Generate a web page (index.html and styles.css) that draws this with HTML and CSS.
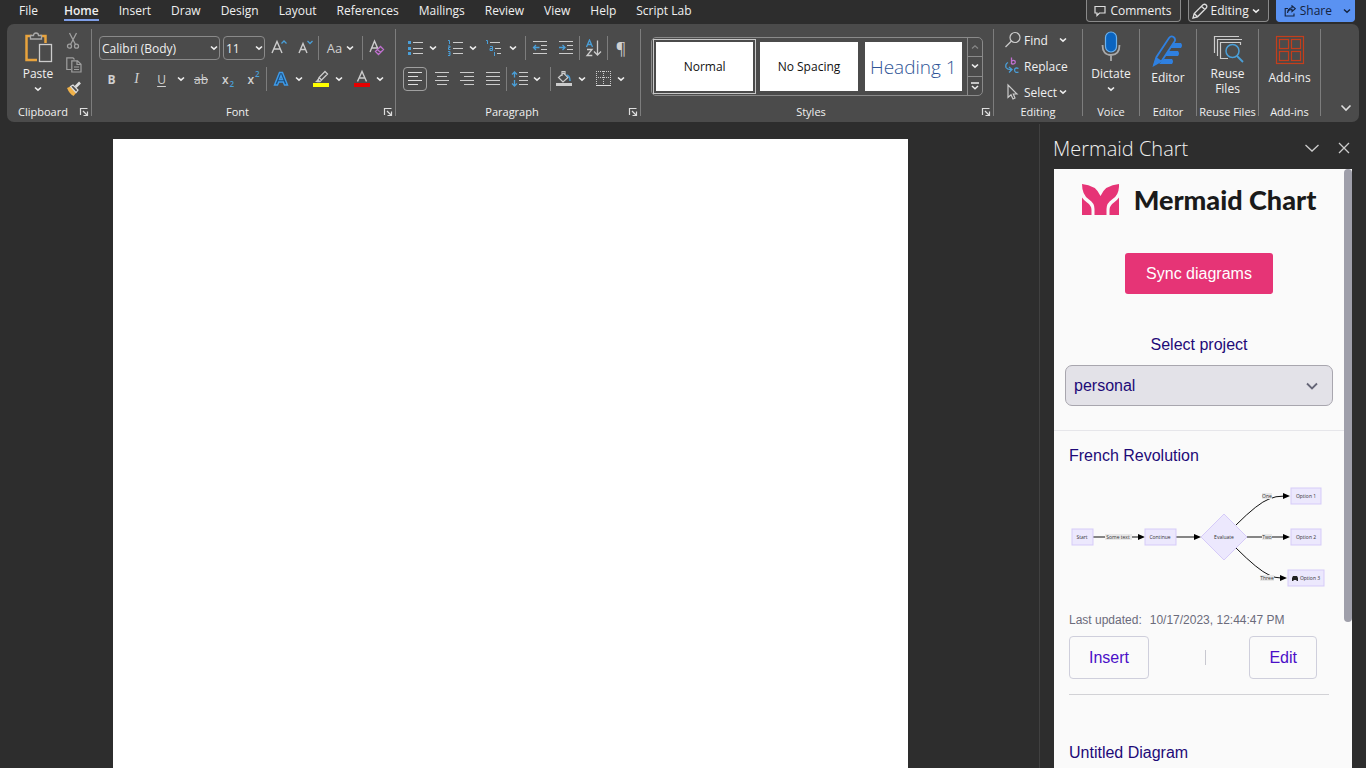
FILE: index.html
```html
<!DOCTYPE html>
<html lang="en">
  <head>
    <meta charset="utf-8">
    <title>Document</title>
    <link rel="stylesheet" href="styles.css">
  </head>
  <body>

    <svg class="display-none">
      <symbol id="chevron" viewBox="0 0 8 8">
        <path d="M1 2.5 L4 5.2 L7 2.5" fill="none" stroke="#eee" stroke-width="1.6"/>
      </symbol>
      <symbol id="launcher" viewBox="0 0 10 10">
        <path d="M1.5 8 V1.5 H8.5 M4 4 L8 8 M8.5 4.5 V8.5 H4.5" fill="none" stroke="#ddd" stroke-width="1.2"/>
      </symbol>
    </svg>

    <header id="tab-bar">
      <nav class="tabs">
        <a class="tab tab-file" href="#">File</a>
        <a class="tab tab-active" href="#">Home</a>
        <a class="tab" href="#">Insert</a>
        <a class="tab" href="#">Draw</a>
        <a class="tab" href="#">Design</a>
        <a class="tab" href="#">Layout</a>
        <a class="tab" href="#">References</a>
        <a class="tab" href="#">Mailings</a>
        <a class="tab" href="#">Review</a>
        <a class="tab" href="#">View</a>
        <a class="tab" href="#">Help</a>
        <a class="tab" href="#">Script Lab</a>
      </nav>
      <div class="header-actions">
        <button class="header-button">
          <svg width="12" height="12" viewBox="0 0 12 12"><path d="M1 1.5 H11 V8 H5.5 L3 10.5 V8 H1 Z" fill="none" stroke="#ddd" stroke-width="1.2"/></svg>
          Comments
        </button>
        <button class="header-button header-button-mode">
          <svg width="16" height="16" viewBox="0 0 16 16"><path d="M1 15 L2.2 10.5 L11 1.8 Q12.6 .6 14.2 2 Q15.5 3.6 14.2 5 L5.5 13.8 Z M9.5 3.2 L12.8 6.5 M2.2 10.5 L5.5 13.8" fill="none" stroke="#ddd" stroke-width="1.3"/></svg>
          Editing
          <svg width="8" height="8"><use href="#chevron"/></svg>
        </button>
        <button class="header-button header-button-share">
          <svg width="12" height="12" viewBox="0 0 12 12"><path d="M4 3.5 H1.2 V11 H10 V8.5 M3.5 8 Q4 4.6 8 4.5 V6.5 L11.3 3.6 L8 .8 V2.8 Q4 3.2 3.5 8" fill="none" stroke="#14233f" stroke-width="1.1"/></svg>
          Share
          <svg class="share-chevron" width="8" height="8" viewBox="0 0 8 8"><path d="M1 2.5 L4 5.2 L7 2.5" fill="none" stroke="#14233f" stroke-width="1.4"/></svg>
        </button>
      </div>
    </header>

    <section id="ribbon">

      <div class="group group-clipboard">
        <div class="clipboard-tools">
          <button class="big-tool">
            <svg width="30" height="32" viewBox="0 0 30 32">
              <path d="M9 5 H3.5 V29 H14" fill="none" stroke="#e8a33d" stroke-width="2.5"/>
              <path d="M17 5 H22.500 V12" fill="none" stroke="#e8a33d" stroke-width="2.5"/>
              <path d="M7.500 8 V4.500 H10.500 Q10.500 2 13 2 Q15.500 2 15.500 4.500 H18.500 V8 Z" fill="#4b4b4b" stroke="#aaa" stroke-width="1.3"/>
              <rect x="16.500" y="13.500" width="12" height="17" fill="#4b4b4b" stroke="#ccc" stroke-width="1.3"/>
            </svg>
            Paste
            <svg width="8" height="8"><use href="#chevron"/></svg>
          </button>
          <div class="clipboard-side">
            <button class="tool" title="Cut">
              <svg width="16" height="18" viewBox="0 0 16 18" fill="none" stroke="#a0a0a0" stroke-width="1.3"><path d="M3.500 1 L9.500 12.500 M10.500 1 L4.500 12.500"/><circle cx="3.500" cy="14.200" r="2"/><circle cx="10.500" cy="14.200" r="2"/></svg>
            </button>
            <button class="tool" title="Copy">
              <svg width="16" height="16" viewBox="0 0 16 16" fill="none" stroke="#a0a0a0" stroke-width="1.2"><path d="M5 12.500 H.8 V.8 H7 L8.500 2.500"/><path d="M5.800 3.800 H11.500 L15 7.200 V15 H5.800 Z M11 4 V7.500 H15 M8 10 H13 M8 12.500 H13"/></svg>
            </button>
            <button class="tool" title="Format Painter">
              <svg width="16" height="16" viewBox="0 0 16 16"><path d="M1 7 L4.500 5.500 L10.500 11.500 L7.500 15 Q3.500 13 1 7 Z" fill="#f0b24a"/><path d="M4.500 5.500 L7 4 L12 9 L10 11.500 Z" fill="#4b4b4b" stroke="#ddd" stroke-width="1.2"/><path d="M9.500 6 L14 1.500" stroke="#ddd" stroke-width="2.6"/></svg>
            </button>
          </div>
        </div>
        <div class="group-label"><span>Clipboard</span><svg width="10" height="10"><use href="#launcher"/></svg></div>
      </div>
      <div class="group-divider"></div>

      <div class="group group-font">
        <div class="tool-row font-row-1">
          <select class="combo" aria-label="Font"><option>Calibri (Body)</option></select>
          <select class="combo combo-size" aria-label="Font size"><option>11</option></select>
          <button class="tool" title="Increase font size">
            <svg width="18" height="18" viewBox="0 0 18 18" fill="none"><path d="M2 14 L7 2.500 L12 14 M3.800 10 H10.200" stroke="#ccc" stroke-width="1.4"/><path d="M11.500 4.500 L14 2 L16.500 4.500" stroke="#4a9fd8" stroke-width="1.3"/></svg>
          </button>
          <button class="tool" title="Decrease font size">
            <svg width="18" height="18" viewBox="0 0 18 18" fill="none"><path d="M2 14 L6 4.500 L10 14 M3.400 10.500 H8.600" stroke="#ccc" stroke-width="1.4"/><path d="M10.500 2 L13 4.500 L15.500 2" stroke="#4a9fd8" stroke-width="1.3"/></svg>
          </button>
          <i class="separator"></i>
          <button class="tool tool-case">Aa <svg width="8" height="8"><use href="#chevron"/></svg></button>
          <i class="separator"></i>
          <button class="tool" title="Clear formatting">
            <svg width="18" height="18" viewBox="0 0 18 18" fill="none"><path d="M2 13 L6.500 2 L10 10 M4 9 H9" stroke="#ccc" stroke-width="1.4"/><path d="M7.500 12.500 L12.500 7.500 L15.500 10.500 L10.500 15.500 Z M9.500 10.500 L12.500 13.500" stroke="#c070d0" stroke-width="1.3"/></svg>
          </button>
        </div>
        <div class="tool-row font-row-2">
          <button class="tool tool-bold">B</button>
          <button class="tool tool-italic">I</button>
          <button class="tool tool-underline">U</button>
          <button class="tool" title="Underline style"><svg width="8" height="8"><use href="#chevron"/></svg></button>
          <button class="tool tool-strike">ab</button>
          <button class="tool tool-script">x<sub>2</sub></button>
          <button class="tool tool-script">x<sup>2</sup></button>
          <i class="separator"></i>
          <button class="tool" title="Text effects">
            <svg width="20" height="20" viewBox="0 0 20 20"><path d="M3.500 16 L8.500 3.500 H11.500 L16.500 16 H13.500 L12.300 13 H7.700 L6.500 16 Z M8.500 10.500 H11.500 L10 6.500 Z" fill="#1b4f80" stroke="#3f9be8" stroke-width="1.4"/></svg>
            <svg width="8" height="8"><use href="#chevron"/></svg>
          </button>
          <button class="tool" title="Text highlight color">
            <svg width="20" height="20" viewBox="0 0 20 20"><path d="M6.500 12.500 L8 8.500 L14 2.500 L16.500 5 L10.500 11 L9 12.500 Z M8 8.500 L10.500 11" fill="none" stroke="#ccc" stroke-width="1.3"/><path d="M4 13 H9 L7.500 9.500 Z" fill="#ccc"/><rect x="2" y="14" width="16" height="4" fill="#ff0"/></svg>
            <svg width="8" height="8"><use href="#chevron"/></svg>
          </button>
          <button class="tool" title="Font color">
            <svg width="20" height="20" viewBox="0 0 20 20"><path d="M5.500 12.500 L10 2.500 L14.500 12.500 M7 9 H13" fill="none" stroke="#ccc" stroke-width="1.4"/><rect x="2" y="14" width="16" height="4" fill="#e60000"/></svg>
            <svg width="8" height="8"><use href="#chevron"/></svg>
          </button>
        </div>
        <div class="group-label"><span>Font</span><svg width="10" height="10"><use href="#launcher"/></svg></div>
      </div>
      <div class="group-divider"></div>

      <div class="group group-paragraph">
        <div class="tool-row paragraph-row-1">
          <button class="tool" title="Bullets">
            <svg width="20" height="18" viewBox="0 0 20 18"><path d="M3 2 H6 V5 H3 Z M3 8 H6 V11 H3 Z M3 13 H6 V16 H3 Z" fill="#4a9fd8"/><path d="M8 3.500 H18 M8 9.500 H18 M8 14.500 H18" stroke="#ccc"/></svg>
            <svg width="8" height="8"><use href="#chevron"/></svg>
          </button>
          <button class="tool" title="Numbering">
            <svg width="20" height="18" viewBox="0 0 20 18" fill="none"><path d="M3 1.500 H4.500 V5 M3 7 H5 V8.500 H3.500 V10.500 H5.500 M3 12.500 H5 V16.500 H3 M3.500 14.500 H5" stroke="#4a9fd8"/><path d="M8 3.500 H18 M8 9.500 H18 M8 14.500 H18" stroke="#ccc"/></svg>
            <svg width="8" height="8"><use href="#chevron"/></svg>
          </button>
          <button class="tool" title="Multilevel list">
            <svg width="20" height="18" viewBox="0 0 20 18" fill="none"><path d="M1 1.500 H2.500 V5 M5 7.500 H7.500 V11.500 H5 V9.500 H7.500 M9.500 13 V17 M9.500 11.500 V12" stroke="#4a9fd8"/><path d="M5 3.500 H15 M10 9.500 H16 M12 14.500 H16" stroke="#ccc"/></svg>
            <svg width="8" height="8"><use href="#chevron"/></svg>
          </button>
          <i class="separator"></i>
          <button class="tool" title="Decrease indent">
            <svg width="16" height="16" viewBox="0 0 16 16" fill="none"><path d="M1 1.500 H15 M9 5.500 H15 M9 9.500 H15 M1 13.500 H15" stroke="#ccc"/><path d="M7.500 7.500 H1.500 M4 5 L1.500 7.500 L4 10" stroke="#4a9fd8" stroke-width="1.3"/></svg>
          </button>
          <button class="tool" title="Increase indent">
            <svg width="16" height="16" viewBox="0 0 16 16" fill="none"><path d="M1 1.500 H15 M9 5.500 H15 M9 9.500 H15 M1 13.500 H15" stroke="#ccc"/><path d="M1 7.500 H7 M4.500 5 L7 7.500 L4.500 10" stroke="#4a9fd8" stroke-width="1.3"/></svg>
          </button>
          <i class="separator"></i>
          <button class="tool" title="Sort">
            <svg width="18" height="18" viewBox="0 0 18 18" fill="none"><path d="M1.500 8 L4.500 1 L7.500 8 M2.500 5.500 H6.500" stroke="#4a9fd8" stroke-width="1.3"/><path d="M2 10.500 H7 L2 16.500 H7.300 M12.500 1.500 V16 M9 12.500 L12.500 16 L16 12.500" stroke="#ccc" stroke-width="1.3"/></svg>
          </button>
          <i class="separator"></i>
          <button class="tool tool-pilcrow">¶</button>
        </div>
        <div class="tool-row paragraph-row-2">
          <button class="tool tool-pressed" title="Align left">
            <svg width="16" height="16" viewBox="0 0 16 16"><path d="M1 1.500 H15 M1 5.500 H11 M1 9.500 H15 M1 13.500 H11" stroke="#ddd"/></svg>
          </button>
          <button class="tool" title="Center">
            <svg width="16" height="16" viewBox="0 0 16 16"><path d="M1 1.500 H15 M3 5.500 H13 M1 9.500 H15 M3 13.500 H13" stroke="#ccc"/></svg>
          </button>
          <button class="tool" title="Align right">
            <svg width="16" height="16" viewBox="0 0 16 16"><path d="M1 1.500 H15 M5 5.500 H15 M1 9.500 H15 M5 13.500 H15" stroke="#ccc"/></svg>
          </button>
          <button class="tool" title="Justify">
            <svg width="16" height="16" viewBox="0 0 16 16"><path d="M1 1.500 H15 M1 5.500 H15 M1 9.500 H15 M1 13.500 H15" stroke="#ccc"/></svg>
          </button>
          <i class="separator"></i>
          <button class="tool" title="Line spacing">
            <svg width="20" height="16" viewBox="0 0 20 16" fill="none"><path d="M5.500 1 V6.500 M3 3.500 L5.500 1 L8 3.500 M5.500 9 V15 M3 12.500 L5.500 15 L8 12.500" stroke="#4a9fd8" stroke-width="1.3"/><path d="M10 1.500 H19 M10 5.500 H19 M10 9.500 H19 M10 13.500 H19" stroke="#ccc"/></svg>
            <svg width="8" height="8"><use href="#chevron"/></svg>
          </button>
          <i class="separator"></i>
          <button class="tool" title="Shading">
            <svg width="20" height="18" viewBox="0 0 20 18" fill="none"><path d="M4.500 7.500 L9.500 3 L14 7.500 L9 12 Z M8 6 V1.500 H11 V4.500" stroke="#ccc" stroke-width="1.2"/><path d="M12.500 5 Q16 5.500 16 11" stroke="#4a9fd8" stroke-width="1.5"/><rect x="2" y="13" width="16" height="3" fill="#ccc"/></svg>
            <svg width="8" height="8"><use href="#chevron"/></svg>
          </button>
          <button class="tool" title="Borders">
            <svg width="20" height="16" viewBox="0 0 20 16" fill="none"><path d="M3 .5 H18 M3.500 0 V13 M17.500 0 V13 M3 6.500 H18 M10.500 0 V13" stroke="#ccc" stroke-dasharray="1 1"/><path d="M3 14.500 H18" stroke="#ddd"/></svg>
            <svg width="8" height="8"><use href="#chevron"/></svg>
          </button>
        </div>
        <div class="group-label"><span>Paragraph</span><svg width="10" height="10"><use href="#launcher"/></svg></div>
      </div>
      <div class="group-divider"></div>

      <div class="group group-styles">
        <div class="gallery">
          <div class="gallery-items">
            <button class="style-card style-card-selected"><span>Normal</span></button>
            <button class="style-card"><span>No Spacing</span></button>
            <button class="style-card style-card-heading"><span>Heading 1</span></button>
          </div>
          <div class="gallery-scroll">
            <button title="Previous row"><svg width="8" height="8" viewBox="0 0 8 8"><path d="M1 5.500 L4 2.800 L7 5.500" fill="none" stroke="#888" stroke-width="1.2"/></svg></button>
            <button title="Next row"><svg width="8" height="8"><use href="#chevron"/></svg></button>
            <button title="More styles"><svg width="8" height="8" viewBox="0 0 8 8"><path d="M0 1 H8 M1 4 L4 6.700 L7 4" fill="none" stroke="#eee" stroke-width="1.5"/></svg></button>
          </div>
        </div>
        <div class="group-label"><span>Styles</span><svg width="10" height="10"><use href="#launcher"/></svg></div>
      </div>
      <div class="group-divider"></div>

      <div class="group group-editing">
        <div class="editing-tools">
          <button class="text-tool">
            <svg width="18" height="18" viewBox="0 0 18 18" fill="none" stroke="#ccc" stroke-width="1.2"><circle cx="11" cy="6.500" r="5"/><path d="M7.500 10 L1.500 16"/></svg>
            Find
            <svg class="find-chevron" width="8" height="8"><use href="#chevron"/></svg>
          </button>
          <button class="text-tool">
            <svg width="18" height="18" viewBox="0 0 18 18" fill="none" stroke-width="1.3"><path d="M7.500 .5 V7 M7.500 4.500 Q9 2.500 11 4 Q12 7 9 7 H7.500" stroke="#c070d0"/><path d="M14.500 11.500 Q11 10 10.500 13 Q11 16.500 14.500 15" stroke="#4a9fd8"/><path d="M4 5.500 Q1 7 2 10.500 Q3.500 13 7.500 12.500 M5 10 L8 12.500 L5 15.500" stroke="#4a9fd8"/></svg>
            Replace
          </button>
          <button class="text-tool">
            <svg width="18" height="18" viewBox="0 0 18 18" fill="none" stroke="#ccc" stroke-width="1.2"><path d="M4 2 V14.500 L7 11.800 L9 16 L11 15 L9.300 11 H13 Z"/></svg>
            Select
            <svg width="8" height="8"><use href="#chevron"/></svg>
          </button>
        </div>
        <div class="group-label"><span>Editing</span></div>
      </div>
      <div class="group-divider"></div>

      <div class="group">
        <button class="big-tool">
          <svg width="24" height="32" viewBox="0 0 24 32" fill="none"><rect x="6.500" y="1" width="11" height="20" rx="5.500" fill="#0a64c0" stroke="#6cb2ee" stroke-width="1.2"/><path d="M3.500 14 Q3.500 24 12 24 Q20.500 24 20.500 14 M12 24 V30" stroke="#aaa" stroke-width="1.8"/></svg>
          Dictate
          <svg width="8" height="8"><use href="#chevron"/></svg>
        </button>
        <div class="group-label"><span>Voice</span></div>
      </div>
      <div class="group-divider"></div>

      <div class="group">
        <button class="big-tool">
          <svg width="32" height="32" viewBox="0 0 32 32"><path d="M18 8 H29 Q31 10.500 29 13 H18 Z M15 16 H26 Q28 18.500 26 21 H12 Z M12 24 H20 Q22 26.500 20 29 H7 Z" fill="#2f80e0"/><path d="M2 30 L4.500 22 L17 3 Q19 .5 21.500 2 Q24 4 22.500 6.500 L10 25.500 Z" fill="#4b4b4b" stroke="#2f80e0" stroke-width="1.8"/><path d="M1 31 L4 22 L10 26 Z" fill="#2f80e0"/></svg>
          Editor
        </button>
        <div class="group-label"><span>Editor</span></div>
      </div>
      <div class="group-divider"></div>

      <div class="group">
        <button class="big-tool big-tool-wide">
          <svg width="32" height="32" viewBox="0 0 32 32" fill="none"><path d="M2.500 22 V5.500 H27 M5.500 25 V8.500 H30" stroke="#ccc" stroke-width="1.2"/><path d="M16 27.500 H8.500 V11.500 H28.500 V14" stroke="#ccc" stroke-width="1.2"/><circle cx="20.500" cy="20" r="6.500" stroke="#4a9fd8" stroke-width="1.5"/><path d="M25 25 L31 31" stroke="#4a9fd8" stroke-width="1.8"/></svg>
          <span>Reuse<br>Files</span>
        </button>
        <div class="group-label"><span>Reuse Files</span></div>
      </div>
      <div class="group-divider"></div>

      <div class="group">
        <button class="big-tool big-tool-wide">
          <svg width="32" height="32" viewBox="0 0 32 32" fill="none" stroke="#c43e1c" stroke-width="1.2"><rect x="2.500" y="1.500" width="27" height="27"/><rect x="5.500" y="4.500" width="9" height="9"/><rect x="17.500" y="4.500" width="9" height="9"/><rect x="5.500" y="16.500" width="9" height="9"/><rect x="17.500" y="16.500" width="9" height="9"/></svg>
          Add-ins
        </button>
        <div class="group-label"><span>Add-ins</span></div>
      </div>
      <div class="group-divider"></div>

      <button class="ribbon-collapse" title="Collapse ribbon">
        <svg width="12" height="8" viewBox="0 0 12 8"><path d="M1.500 1.500 L6 6 L10.500 1.500" fill="none" stroke="#ddd" stroke-width="1.6"/></svg>
      </button>
    </section>

    <div id="workspace">
      <main id="canvas">
        <article class="page"></article>
      </main>

      <aside id="task-pane">
        <div class="pane-header">
          <h2>Mermaid Chart</h2>
          <button title="Task pane options"><svg width="16" height="16" viewBox="0 0 16 16"><path d="M1.500 5 L8 11 L14.500 5" fill="none" stroke="#ccc" stroke-width="1.3"/></svg></button>
          <button title="Close"><svg width="16" height="16" viewBox="0 0 16 16"><path d="M3 3 L13 13 M13 3 L3 13" fill="none" stroke="#ccc" stroke-width="1.3"/></svg></button>
        </div>

        <div class="webview">
          <div class="webview-content">
            <div class="brand">
              <svg width="37" height="31" viewBox="0 0 37 31">
                <path d="M0 0 Q14 1 18.500 12 Q23 1 37 0 Q37.500 11 30 15.500 Q24.500 19 24.500 25 V31 H12.500 V25 Q12.500 19 7 15.500 Q0 11 0 0 Z" fill="#e63476"/>
                <path d="M0 13.500 Q2 16.500 5 18.500 Q9.500 21.500 9.500 26 V31 H0 Z M37 13.500 Q35 16.500 32 18.500 Q27.500 21.500 27.500 26 V31 H37 Z" fill="#e63476"/>
              </svg>
              <span>Mermaid Chart</span>
            </div>
            <button class="sync">Sync diagrams</button>

            <div class="project">
              <label for="project">Select project</label>
              <select id="project"><option>personal</option></select>
            </div>

            <section class="diagram">
              <h3>French Revolution</h3>
              <svg class="chart" viewBox="0 0 260 112">
                <g class="edges">
                  <path d="M24 57 H70 M107 57 H126 M178 57 H215 M167 45 Q189 23 200 19 Q206 16 216 16 M167 68 Q189 90 200 95 Q206 98 212 98"/>
                </g>
                <g class="arrows">
                  <path d="M69 54 L76 57 L69 60 Z M125 54 L132 57 L125 60 Z M214 54 L221 57 L214 60 Z M214 13 L221 16 L214 19 Z M211 95 L218 98 L211 101 Z"/>
                </g>
                <g class="nodes">
                  <rect x="3" y="49" width="21" height="16"/>
                  <rect x="76" y="49" width="31" height="16"/>
                  <path d="M155 34 L178 57 L155 80 L132 57 Z"/>
                  <rect x="222" y="8" width="30" height="16"/>
                  <rect x="222" y="49" width="30" height="16"/>
                  <rect x="219" y="90" width="36" height="16"/>
                </g>
                <g class="edge-labels">
                  <rect x="36" y="54" width="27" height="6"/><text x="49" y="59">Some text</text>
                  <rect x="193" y="13" width="10" height="6"/><text x="198" y="18">One</text>
                  <rect x="193" y="54" width="10" height="6"/><text x="198" y="59">Two</text>
                  <rect x="191" y="95" width="14" height="6"/><text x="198" y="100">Three</text>
                </g>
                <text x="13" y="59">Start</text>
                <text x="91" y="59">Continue</text>
                <text x="155" y="59">Evaluate</text>
                <text x="237" y="18">Option 1</text>
                <text x="237" y="59">Option 2</text>
                <path d="M223 98 L224 96 H228 L229 98 V101 H227.500 V100 H224.500 V101 H223 Z" fill="#222"/>
                <text x="241" y="100">Option 3</text>
              </svg>
              <p class="updated"><span>Last updated:</span><time>10/17/2023, 12:44:47 PM</time></p>
              <div class="diagram-actions">
                <button>Insert</button>
                <i class="action-divider"></i>
                <button>Edit</button>
              </div>
            </section>

            <section class="diagram">
              <h3>Untitled Diagram</h3>
            </section>
          </div>
          <div class="scrollbar"><div class="scrollbar-thumb"></div></div>
        </div>
      </aside>
    </div>

  </body>
</html>
```

FILE: styles.css
```css
*,
*:before,
*:after {
  box-sizing: border-box;
}

body {
  display: flex;
  flex-flow: column;
  height: 100vh;
  overflow: hidden;
  background: #2d2d2d;
  margin: 0px;
  color: #F0F0F0;
  font-family: 'Open Sans', 'Noto Sans', sans-serif;
  font-size: 12px;
}

button,
select {
  border: 0px;
  margin: 0px;
  padding: 0px;
  background: transparent;
  color: inherit;
  font: inherit;
}

svg {
  flex: none;
}

.display-none {
  display: none;
}


/* Tabs */

#tab-bar {
  display: flex;
  justify-content: space-between;
  height: 24px;
  padding: 0px 11px 0px 19px;
}

.tabs {
  display: flex;
  gap: 20px;
}
.tab {
  height: 21px;
  color: #F0F0F0;
  line-height: 21px;
  text-decoration: none;
  white-space: nowrap;
}
.tab-file {
  margin-right: 6px;
}
.tab-active {
  border-bottom: 2px solid #7F9FE8;
  font-weight: 600;
}

.header-actions {
  display: flex;
  gap: 7px;
}
.header-button {
  display: flex;
  align-items: center;
  gap: 4px;
  height: 22px;
  border: 1px solid #8A8A8A;
  border-top: 0px;
  border-radius: 0px 0px 4px 4px;
  padding: 0px 8px 0px 7px;
  background: #3A3A3A;
}
.header-button-mode {
  gap: 3px;
  padding: 0px 8px 0px 3px;
}
.header-button-share {
  border-color: #5A92F2;
  padding: 0px 3px 0px 7px;
  background: #5A92F2;
  color: #14233F;
}
.share-chevron {
  margin-left: 7px;
}


/* Ribbon */

#ribbon {
  display: flex;
  height: 98px;
  margin: 0px 7px;
  border-radius: 7px;
  padding: 5px 0px 2px;
  background: #4B4B4B;
}

.group {
  display: flex;
  flex: none;
  flex-flow: column;
  align-items: center;
}
.group-divider {
  width: 1px;
  margin-bottom: 4px;
  background: #7D7D7D;
}
.group-label {
  display: flex;
  align-items: center;
  align-self: stretch;
  margin-top: auto;
  font-size: 11px;
  line-height: 16px;
  white-space: nowrap;
}
.group-label span {
  flex: 1;
  text-align: center;
}
.group-label svg {
  margin-right: 2px;
}

.tool {
  display: flex;
  justify-content: center;
  align-items: center;
  gap: 4px;
  height: 24px;
  color: #D0D0D0;
}
.tool-row {
  display: grid;
  align-self: flex-start;
  height: 24px;
  margin-top: 7px;
}
.separator {
  justify-self: end;
  width: 1px;
  background: #7D7D7D;
}

.big-tool {
  display: flex;
  flex-flow: column;
  align-items: center;
  min-width: 56px;
  padding: 2px 0px 0px;
  line-height: 15px;
}
.big-tool-wide {
  min-width: 61px;
}
.big-tool svg:first-child {
  margin-bottom: 3px;
}
.big-tool svg:last-child {
  margin-top: 4px;
}

.group-clipboard {
  width: 84px;
}
.clipboard-tools {
  display: flex;
  align-self: flex-start;
  padding-left: 3px;
}
.clipboard-side {
  display: flex;
  flex-flow: column;
}

.group-font {
  width: 303px;
}
.group-font .tool-row {
  margin-left: 7px;
}
.font-row-1 {
  grid-template-columns: 124px 42px 28px 25px 1px 43px 1px 27px;
}
.font-row-2 {
  grid-template-columns: 25px 25px 25px 13px 28px 26px 25px 1px 39px 42px 40px;
}
.combo {
  appearance: none;
  height: 24px;
  margin-right: 3px;
  border: 1px solid #8A8A8A;
  border-radius: 4px;
  padding-left: 2px;
  background: url("data:image/svg+xml,%3Csvg xmlns='http://www.w3.org/2000/svg' width='8' height='8'%3E%3Cpath d='M1 2.5 L4 5.2 L7 2.5' fill='none' stroke='%23eee' stroke-width='1.6'/%3E%3C/svg%3E") right 1px center no-repeat;
}
.combo-size {
  margin-right: 0px;
}
.tool-case {
  font-size: 13px;
}
.tool-bold {
  font-weight: 700;
}
.tool-italic {
  font-family: 'Liberation Serif', serif;
  font-size: 14px;
  font-style: italic;
}
.tool-underline {
  text-decoration: underline;
  text-underline-offset: 2px;
}
.tool-strike {
  text-decoration: line-through;
}
.tool-script {
  gap: 1px;
  font-weight: 600;
}
.tool-script sub,
.tool-script sup {
  color: #4A9FD8;
  font-size: 8px;
  line-height: 8px;
}
.tool-script sub {
  align-self: flex-end;
  margin-bottom: 3px;
}
.tool-script sup {
  align-self: flex-start;
  margin-top: 3px;
}

.group-paragraph {
  width: 244px;
}
.group-paragraph .tool-row {
  margin-left: 5px;
}
.paragraph-row-1 {
  grid-template-columns: 40px 40px 40px 5px 27px 26px 1px 27px 1px 26px;
}
.paragraph-row-2 {
  grid-template-columns: 28px 25px 25px 27px 1px 36px 8px 38px 40px;
}
.tool-pilcrow {
  font-size: 16px;
}
.tool-pressed {
  width: 24px;
  justify-self: center;
  border: 1px solid #A0A0A0;
  border-radius: 4px;
}

.group-styles {
  flex: 1;
  align-items: stretch;
}
.gallery {
  display: flex;
  height: 59px;
  margin: 8px 10px 0px;
  border: 1px solid #8A8A8A;
  border-radius: 5px;
}
.gallery-items {
  display: flex;
  flex: 1;
  gap: 1px;
  padding: 1px 2px 1px 1px;
}
.style-card {
  flex: 1;
  border: 1px solid transparent;
  padding: 2px;
  color: #111;
  white-space: nowrap;
}
.style-card span {
  display: flex;
  justify-content: center;
  align-items: center;
  height: 100%;
  background: #FFF;
}
.style-card-selected {
  border-color: #C8C8C8;
}
.style-card-heading {
  color: #2F5496;
  font-size: 19px;
  font-weight: 300;
  line-height: 20px;
}
.gallery-scroll {
  display: flex;
  flex-flow: column;
  width: 15px;
  border-left: 1px solid #8A8A8A;
}
.gallery-scroll button {
  flex: 1;
  line-height: 8px;
}
.gallery-scroll button + button {
  border-top: 1px solid #8A8A8A;
}

.group-editing {
  width: 88px;
}
.editing-tools {
  display: flex;
  flex-flow: column;
  align-self: stretch;
  gap: 4px;
  padding-left: 10px;
}
.text-tool {
  display: flex;
  align-items: center;
  gap: 2px;
  height: 22px;
}
.find-chevron {
  margin-left: 9px;
}

.ribbon-collapse {
  align-self: flex-end;
  width: 38px;
  padding: 0px 0px 4px 12px;
}


/* Document */

#workspace {
  display: flex;
  flex: 1;
  min-height: 0px;
}
#canvas {
  display: flex;
  flex: 1;
  justify-content: center;
  padding: 17px 18px 0px 0px;
}
.page {
  width: 795px;
  background: #FFF;
}


/* Task pane */

#task-pane {
  display: flex;
  flex-flow: column;
  width: 327px;
  margin-top: 2px;
  border-left: 1px solid #404040;
  padding: 0px 14px 0px 13px;
}
.pane-header {
  display: flex;
  align-items: center;
  gap: 16px;
  height: 45px;
  padding-top: 3px;
}
.pane-header h2 {
  flex: 1;
  margin: 0px;
  font-size: 20px;
  font-weight: 300;
}
.pane-header button {
  height: 16px;
}

.webview {
  display: flex;
  flex: 1;
  min-height: 0px;
  margin-left: 1px;
  background: #FAFAFA;
  color: #1E0A78;
  font-family: 'Liberation Sans', Arial, sans-serif;
  font-size: 16px;
}
.webview-content {
  flex: 1;
  overflow: hidden;
}
.scrollbar {
  width: 8px;
}
.scrollbar-thumb {
  height: 453px;
  border-radius: 4px;
  background: #9F9FAA;
}

.brand {
  display: flex;
  justify-content: center;
  align-items: center;
  gap: 15px;
  height: 61px;
  color: #1A1A1A;
  font-family: Lato, sans-serif;
  font-size: 27px;
  font-weight: 900;
  white-space: nowrap;
}
.sync {
  display: block;
  height: 41px;
  margin: 23px auto 0px;
  border-radius: 3px;
  padding: 0px 21px;
  background: #E63476;
  color: #FFF;
}

.project {
  display: flex;
  flex-flow: column;
  align-items: center;
  gap: 10px;
  border-bottom: 1px solid #E6E6EA;
  padding: 41px 11px 24px;
  line-height: 20px;
}
.project select {
  appearance: none;
  width: 100%;
  height: 41px;
  border: 1px solid #A8A6AE;
  border-radius: 7px;
  padding: 0px 8px;
  background: #E3E2E8 url("data:image/svg+xml,%3Csvg xmlns='http://www.w3.org/2000/svg' width='12' height='8'%3E%3Cpath d='M1 1.5 L6 6.5 L11 1.5' fill='none' stroke='%23667' stroke-width='1.8'/%3E%3C/svg%3E") right 14px center no-repeat;
}

.diagram {
  padding: 15px 15px 0px;
}
.diagram h3 {
  margin: 0px;
  font-size: 16px;
  font-weight: 400;
  line-height: 20px;
}
.chart {
  display: block;
  width: 100%;
  margin-top: 14px;
  font-family: 'Open Sans', sans-serif;
  font-size: 5px;
  text-anchor: middle;
}
.chart text {
  fill: #333;
}
.edges {
  fill: none;
  stroke: #111;
  stroke-width: 1;
}
.nodes {
  fill: #ECE8FD;
  stroke: #D6CBF8;
  stroke-width: 1;
}
.edge-labels rect {
  fill: #E8E8E8;
}
.updated {
  display: flex;
  gap: 8px;
  margin: 20px 0px 0px;
  color: #6B6B7B;
  font-size: 12px;
  line-height: 16px;
}
.diagram-actions {
  display: flex;
  justify-content: space-between;
  align-items: center;
  margin-top: 8px;
  border-bottom: 1px solid #D2D2D6;
  padding: 0px 12px 15px 0px;
}
.diagram-actions button {
  height: 43px;
  border: 1px solid #CFCFDC;
  border-radius: 4px;
  padding: 0px 19px;
  color: #4A0FC8;
}
.action-divider {
  width: 1px;
  height: 15px;
  margin-left: 12px;
  background: #C8C8D0;
}
.diagram + .diagram {
  padding-top: 48px;
}
```
